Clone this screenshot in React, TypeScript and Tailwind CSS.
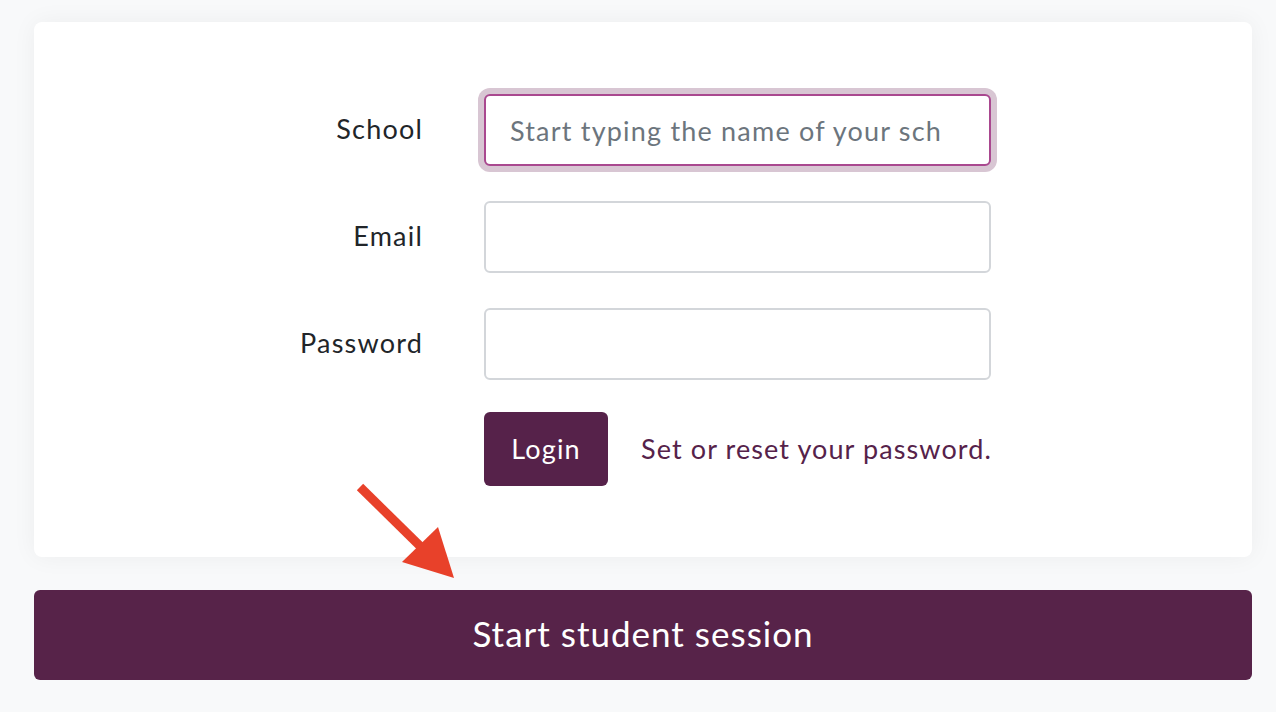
import React from 'react';

const font = { fontFamily: 'Lato, "Noto Sans", sans-serif' };

function Field({ label, focused, placeholder, type = 'text' }: { label: string; focused?: boolean; placeholder?: string; type?: string }) {
  return (
    <div className="flex items-center">
      <label className="w-[389px] pb-[1px] text-right text-[27px] tracking-[1.2px] text-[#212529]">{label}</label>
      <input
        type={type}
        placeholder={placeholder}
        className={
          'ml-[61px] h-[72px] w-[507px] rounded-[6px] border-2 bg-white pl-[24px] pr-[48px] text-[27px] tracking-[1.2px] text-[#495057] outline-none placeholder:text-[#6c757d] ' +
          (focused ? 'border-[#a9488f] shadow-[0_0_0_6px_#d8c6d3]' : 'border-[#d3d6da]')
        }
      />
    </div>
  );
}

export default function App() {
  return (
    <div className="relative min-h-[712px] w-full bg-[#f8f9fa] pl-[34px] pr-[24px] pt-[22px]" style={font}>
      {/* card */}
      <div className="flex h-[535px] flex-col gap-[35px] rounded-[8px] bg-white pt-[72px] shadow-[0_0_24px_rgba(0,0,0,0.05)]">
        <Field label="School" focused placeholder="Start typing the name of your school" />
        <Field label="Email" type="email" />
        <Field label="Password" type="password" />
        <div className="-mt-[3px] ml-[450px] flex items-center">
          <button className="h-[74px] w-[124px] rounded-[6px] bg-[#56224a] text-[27px] tracking-[1.2px] text-white">Login</button>
          <a className="ml-[33px] text-[27px] tracking-[1.1px] text-[#56224a]" href="#">Set or reset your password.</a>
        </div>
      </div>

      <button className="mt-[33px] h-[90px] w-full rounded-[6px] bg-[#572349] pb-[3px] text-[35px] tracking-[1px] text-white">
        Start student session
      </button>

      {/* annotation arrow */}
      <svg className="pointer-events-none absolute left-0 top-0" width="1276" height="712">
        <line x1="360" y1="487" x2="420" y2="546" stroke="#e8412a" strokeWidth="9" />
        <polygon points="454,578 402,562 438,527" fill="#e8412a" />
      </svg>
    </div>
  );
}
